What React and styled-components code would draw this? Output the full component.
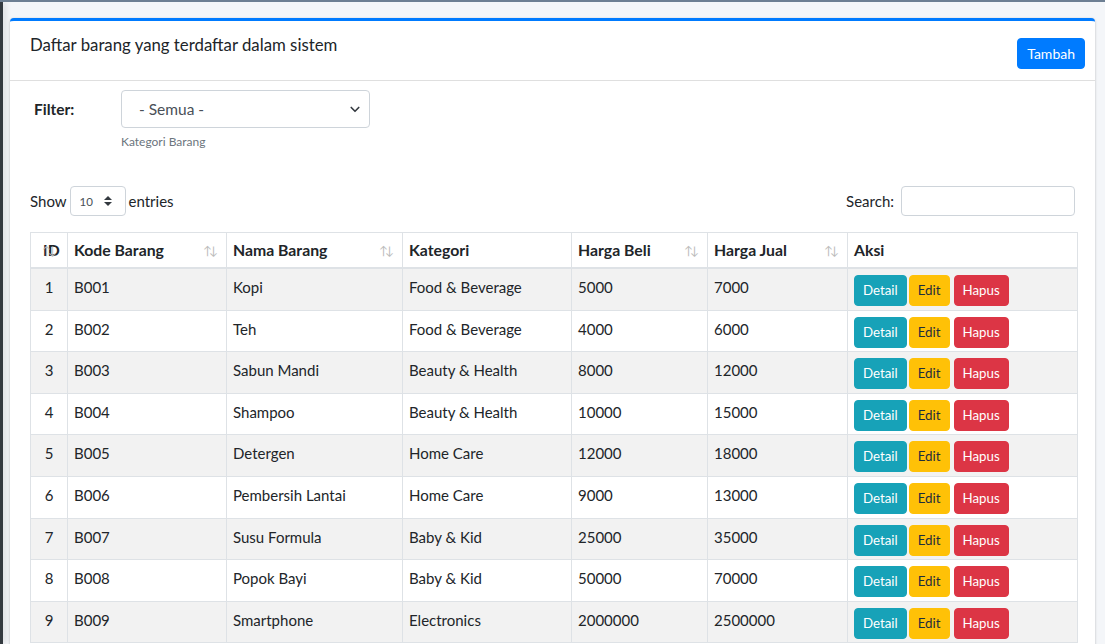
import React from 'react';
import styled, { createGlobalStyle } from 'styled-components';

const GlobalStyle = createGlobalStyle`
  html, body {
    margin: 0;
    padding: 0;
    background: #f4f6f9;
  }
  body {
    font-family: "Source Sans Pro", Lato, "Liberation Sans", sans-serif;
    color: #212529;
    font-size: 15px;
    overflow: hidden;
  }
`;

const items = [
  ['B001', 'Kopi', 'Food & Beverage', '5000', '7000'],
  ['B002', 'Teh', 'Food & Beverage', '4000', '6000'],
  ['B003', 'Sabun Mandi', 'Beauty & Health', '8000', '12000'],
  ['B004', 'Shampoo', 'Beauty & Health', '10000', '15000'],
  ['B005', 'Detergen', 'Home Care', '12000', '18000'],
  ['B006', 'Pembersih Lantai', 'Home Care', '9000', '13000'],
  ['B007', 'Susu Formula', 'Baby & Kid', '25000', '35000'],
  ['B008', 'Popok Bayi', 'Baby & Kid', '50000', '70000'],
  ['B009', 'Smartphone', 'Electronics', '2000000', '2500000'],
];

const columns = [
  { label: 'ID', width: 37, sort: true, narrow: true },
  { label: 'Kode Barang', width: 159, sort: true },
  { label: 'Nama Barang', width: 176, sort: true },
  { label: 'Kategori', width: 169 },
  { label: 'Harga Beli', width: 136, sort: true },
  { label: 'Harga Jual', width: 140, sort: true },
  { label: 'Aksi', width: 230 },
];

const Page = styled.div`
  display: flex;
  height: 644px;
  overflow: hidden;
  border-top: 2px solid #6d7f93;
  box-sizing: border-box;
`;

const SidebarEdge = styled.div`
  width: 3px;
  flex-shrink: 0;
  background: #343a40;
  box-shadow: 2px 0 6px rgba(0, 0, 0, 0.18);
`;

const Content = styled.div`
  flex: 1;
  padding: 16px 10px 0 7px;
  min-width: 0;
`;

const Card = styled.div`
  background: #fff;
  border-top: 3px solid #007bff;
  border-radius: 4px 4px 0 0;
  box-shadow: 0 0 1px rgba(0, 0, 0, 0.125), 0 1px 3px rgba(0, 0, 0, 0.2);
  height: 630px;
`;

const CardHeader = styled.div`
  display: flex;
  align-items: flex-start;
  justify-content: space-between;
  padding: 13px 10px 12px 20px;
  height: 60px;
  box-sizing: border-box;
  border-bottom: 1px solid rgba(0, 0, 0, 0.125);
`;

const CardTitle = styled.h3`
  margin: 0;
  font-size: 16.8px;
  font-weight: 400;
  line-height: 1.3;
`;

const Button = styled.button`
  font-family: inherit;
  border: 1px solid ${p => p.bg};
  background: ${p => p.bg};
  color: ${p => p.fg || '#fff'};
  border-radius: 4px;
  cursor: pointer;
  font-size: 13.3px;
  line-height: 21px;
  padding: 4px 8px;
`;

const TopButton = styled(Button)`
  margin-top: 4px;
  font-size: 14px;
  padding: 4px 9px;
  height: 31px;
`;

const CardBody = styled.div`
  padding: 9px 20px 0 20px;
`;

const FilterRow = styled.div`
  display: flex;
  align-items: flex-start;
`;

const FilterLabel = styled.label`
  width: 87px;
  padding-left: 4px;
  padding-top: 10px;
  font-weight: 700;
  font-size: 15.5px;
`;

const FilterField = styled.div`
  display: flex;
  flex-direction: column;
`;

const SelectBox = styled.div`
  display: flex;
  align-items: center;
  justify-content: space-between;
  box-sizing: border-box;
  width: ${p => p.w}px;
  height: ${p => p.h}px;
  border: 1px solid #ced4da;
  border-radius: 4px;
  padding: ${p => p.pad};
  font-size: ${p => p.fs}px;
  color: #495057;
  background: #fff;
`;

const HelpText = styled.small`
  margin-top: 6px;
  font-size: 12px;
  color: #6c757d;
`;

const Toolbar = styled.div`
  display: flex;
  justify-content: space-between;
  align-items: center;
  margin-top: 37px;
  width: 1045px;
`;

const Inline = styled.div`
  display: flex;
  align-items: center;
  gap: 3px;
  font-size: 15px;
`;

const SearchInput = styled.div`
  width: 174px;
  height: 30px;
  box-sizing: border-box;
  border: 1px solid #ced4da;
  border-radius: 4px;
  margin-left: 4px;
`;

const Table = styled.table`
  margin-top: 16px;
  border-collapse: collapse;
  table-layout: fixed;
  width: 1047px;
  font-size: 15px;
`;

const Th = styled.th`
  position: relative;
  border: 1px solid #dee2e6;
  border-bottom: 2px solid #dee2e6;
  text-align: left;
  font-weight: 700;
  font-size: 15.8px;
  padding: 5px ${p => (p.narrow ? '2px' : '6px')} 5px ${p => (p.narrow ? '12px' : '6px')};
  line-height: 24px;
  white-space: nowrap;
  overflow: hidden;
`;

const SortIcon = styled.span`
  position: absolute;
  right: ${p => (p.narrow ? '13px' : '11px')};
  top: 10px;
  font-size: 12px;
  font-weight: 400;
  letter-spacing: -3px;
  color: #bbb;
  line-height: 16px;
`;

const Tr = styled.tr`
  background: ${p => (p.striped ? 'rgba(0, 0, 0, 0.05)' : '#fff')};
`;

const Td = styled.td`
  border: 1px solid #dee2e6;
  padding: 6px 6px 3.6px 6px;
  vertical-align: top;
  line-height: 24px;
  text-align: ${p => (p.center ? 'center' : 'left')};
  color: #212529;
  white-space: nowrap;
`;

const Actions = styled.div`
  display: flex;
  gap: 2px;
  height: 31px;
`;

const ActionButton = styled(Button)`
  margin-right: ${p => p.mr || 0}px;
`;

function Chevron() {
  return (
    <svg width="12" height="12" viewBox="0 0 16 16" fill="none" stroke="#343a40" strokeWidth="2.2" strokeLinecap="round" strokeLinejoin="round">
      <path d="M3 6l5 5 5-5" />
    </svg>
  );
}

function UpDown() {
  return (
    <svg width="10" height="12" viewBox="0 0 10 12" fill="#343a40">
      <path d="M5 1l4 4H1z" />
      <path d="M5 11l4-4H1z" />
    </svg>
  );
}

export default function App() {
  return (
    <>
      <GlobalStyle />
      <Page>
        <SidebarEdge />
        <Content>
          <Card>
            <CardHeader>
              <CardTitle>Daftar barang yang terdaftar dalam sistem</CardTitle>
              <TopButton bg="#007bff">Tambah</TopButton>
            </CardHeader>
            <CardBody>
              <FilterRow>
                <FilterLabel>Filter:</FilterLabel>
                <FilterField>
                  <SelectBox w={249} h={38} pad="0 8px 0 17px" fs={15.5}>
                    <span>- Semua -</span>
                    <Chevron />
                  </SelectBox>
                  <HelpText>Kategori Barang</HelpText>
                </FilterField>
              </FilterRow>

              <Toolbar>
                <Inline>
                  Show
                  <SelectBox w={56} h={30} pad="0 12px 0 9px" fs={11.5}>
                    <span>10</span>
                    <UpDown />
                  </SelectBox>
                  entries
                </Inline>
                <Inline>
                  Search:
                  <SearchInput />
                </Inline>
              </Toolbar>

              <Table>
                <colgroup>
                  {columns.map(c => (
                    <col key={c.label} style={{ width: c.width }} />
                  ))}
                </colgroup>
                <thead>
                  <tr>
                    {columns.map(c => (
                      <Th key={c.label} narrow={c.narrow}>
                        {c.label}
                        {c.sort && <SortIcon narrow={c.narrow}>↑↓</SortIcon>}
                      </Th>
                    ))}
                  </tr>
                </thead>
                <tbody>
                  {items.map((row, i) => (
                    <Tr key={row[0]} striped={i % 2 === 0}>
                      <Td center>{i + 1}</Td>
                      {row.map((v, j) => (
                        <Td key={j}>{v}</Td>
                      ))}
                      <Td>
                        <Actions>
                          <ActionButton bg="#17a2b8">Detail</ActionButton>
                          <ActionButton bg="#ffc107" fg="#1f2d3d" mr={2}>Edit</ActionButton>
                          <ActionButton bg="#dc3545">Hapus</ActionButton>
                        </Actions>
                      </Td>
                    </Tr>
                  ))}
                </tbody>
              </Table>
            </CardBody>
          </Card>
        </Content>
      </Page>
    </>
  );
}
